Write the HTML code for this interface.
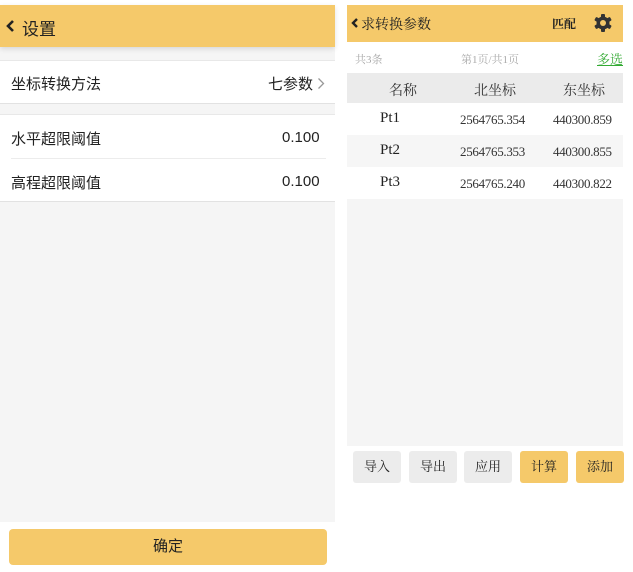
<!DOCTYPE html>
<html><head><meta charset="utf-8"><style>
*{margin:0;padding:0;box-sizing:border-box}
body{width:633px;height:572px;background:#fff;position:relative;overflow:hidden;font-family:"Liberation Sans","Noto Sans CJK SC",sans-serif;color:#222}
.a{position:absolute}
.serif{font-family:"Liberation Serif","Noto Serif CJK SC",serif}
</style></head><body>
<!-- left -->
<div class="a" style="left:0;top:5px;width:335px;height:517px;background:#f5f5f5"></div>
<div class="a" style="left:0;top:5px;width:335px;height:42px;background:#f5c96a;box-shadow:0 2px 5px rgba(0,0,0,.12)"></div>
<svg class="a" style="left:5px;top:19px" width="10" height="14"><path d="M8 2L3 7l5 5" stroke="#222" stroke-width="2.6" fill="none"/></svg>
<div class="a" style="left:22px;top:15px;font-size:17px">设置</div>
<div class="a" style="left:0;top:60px;width:335px;height:44px;background:#fff;border-top:1px solid #e8e8e8;border-bottom:1px solid #e2e2e2"></div>
<div class="a" style="left:11px;top:73px;font-size:15px">坐标转换方法</div>
<div class="a" style="left:268px;top:73px;font-size:15px">七参数</div>
<svg class="a" style="left:317px;top:77px" width="8" height="13"><path d="M1.5 1.5l5 5-5 5" stroke="#999" stroke-width="1.3" fill="none"/></svg>
<div class="a" style="left:0;top:114px;width:335px;height:88px;background:#fff;border-top:1px solid #e8e8e8;border-bottom:1px solid #e2e2e2"></div>
<div class="a" style="left:11px;top:158px;width:315px;height:1px;background:#ececec"></div>
<div class="a" style="left:11px;top:128px;font-size:15px">水平超限阈值</div>
<div class="a" style="left:282px;top:129px;font-size:15px">0.100</div>
<div class="a" style="left:11px;top:172px;font-size:15px">高程超限阈值</div>
<div class="a" style="left:282px;top:173px;font-size:15px">0.100</div>
<div class="a" style="left:9px;top:529px;width:318px;height:36px;background:#f5c96a;border-radius:4px;text-align:center;line-height:36px;font-size:15px">确定</div>
<!-- right -->
<div class="a" style="left:347px;top:5px;width:276px;height:441px;background:#f5f5f5"></div>
<div class="a" style="left:347px;top:5px;width:276px;height:37px;background:#f5c96a"></div>
<svg class="a" style="left:351px;top:17px" width="8" height="12"><path d="M6 2L2 6l4 4" stroke="#222" stroke-width="2.4" fill="none"/></svg>
<div class="a serif" style="left:361px;top:14px;font-size:14px">求转换参数</div>
<div class="a serif" style="left:552px;top:15px;font-size:12px;font-weight:bold">匹配</div>
<svg class="a" style="left:593px;top:13px" width="20" height="20" viewBox="0 0 20 20"><g fill="#333"><circle cx="10" cy="10" r="6.5"/><g id="t"><rect x="8" y="1" width="4" height="18" rx="1"/></g><use href="#t" transform="rotate(60 10 10)"/><use href="#t" transform="rotate(120 10 10)"/></g><circle cx="10" cy="10" r="3" fill="#f5c96a"/></svg>
<div class="a" style="left:347px;top:42px;width:276px;height:31px;background:#fff"></div>
<div class="a serif" style="left:355px;top:51px;font-size:11px;color:#aaa">共3条</div>
<div class="a serif" style="left:461px;top:51px;font-size:11px;color:#aaa">第1页/共1页</div>
<div class="a serif" style="left:597px;top:49px;font-size:13px;color:#3a3;text-decoration:underline">多选</div>
<div class="a" style="left:347px;top:73px;width:276px;height:30px;background:#ebebeb"></div>
<div class="a serif" style="left:389px;top:80px;font-size:14px;color:#333">名称</div>
<div class="a serif" style="left:474px;top:80px;font-size:14px;color:#333">北坐标</div>
<div class="a serif" style="left:563px;top:80px;font-size:14px;color:#333">东坐标</div>
<div class="a" style="left:347px;top:103px;width:276px;height:32px;background:#fff"></div>
<div class="a" style="left:347px;top:135px;width:276px;height:32px;background:#f6f6f6"></div>
<div class="a" style="left:347px;top:167px;width:276px;height:32px;background:#fff"></div>
<div class="a serif" style="left:380px;top:110px;font-size:15px">Pt1</div>
<div class="a serif" style="left:460px;top:112px;font-size:13px;color:#333;letter-spacing:-.3px">2564765.354</div>
<div class="a serif" style="left:553px;top:112px;font-size:13px;color:#333;letter-spacing:-.3px">440300.859</div>
<div class="a serif" style="left:380px;top:142px;font-size:15px">Pt2</div>
<div class="a serif" style="left:460px;top:144px;font-size:13px;color:#333;letter-spacing:-.3px">2564765.353</div>
<div class="a serif" style="left:553px;top:144px;font-size:13px;color:#333;letter-spacing:-.3px">440300.855</div>
<div class="a serif" style="left:380px;top:174px;font-size:15px">Pt3</div>
<div class="a serif" style="left:460px;top:176px;font-size:13px;color:#333;letter-spacing:-.3px">2564765.240</div>
<div class="a serif" style="left:553px;top:176px;font-size:13px;color:#333;letter-spacing:-.3px">440300.822</div>
<div class="a serif" style="left:353px;top:451px;width:48px;height:32px;background:#ececec;border-radius:3px;text-align:center;line-height:32px;font-size:13px">导入</div>
<div class="a serif" style="left:409px;top:451px;width:48px;height:32px;background:#ececec;border-radius:3px;text-align:center;line-height:32px;font-size:13px">导出</div>
<div class="a serif" style="left:464px;top:451px;width:48px;height:32px;background:#ececec;border-radius:3px;text-align:center;line-height:32px;font-size:13px">应用</div>
<div class="a serif" style="left:520px;top:451px;width:48px;height:32px;background:#f5c96a;border-radius:3px;text-align:center;line-height:32px;font-size:13px">计算</div>
<div class="a serif" style="left:576px;top:451px;width:48px;height:32px;background:#f5c96a;border-radius:3px;text-align:center;line-height:32px;font-size:13px">添加</div>
</body></html>
